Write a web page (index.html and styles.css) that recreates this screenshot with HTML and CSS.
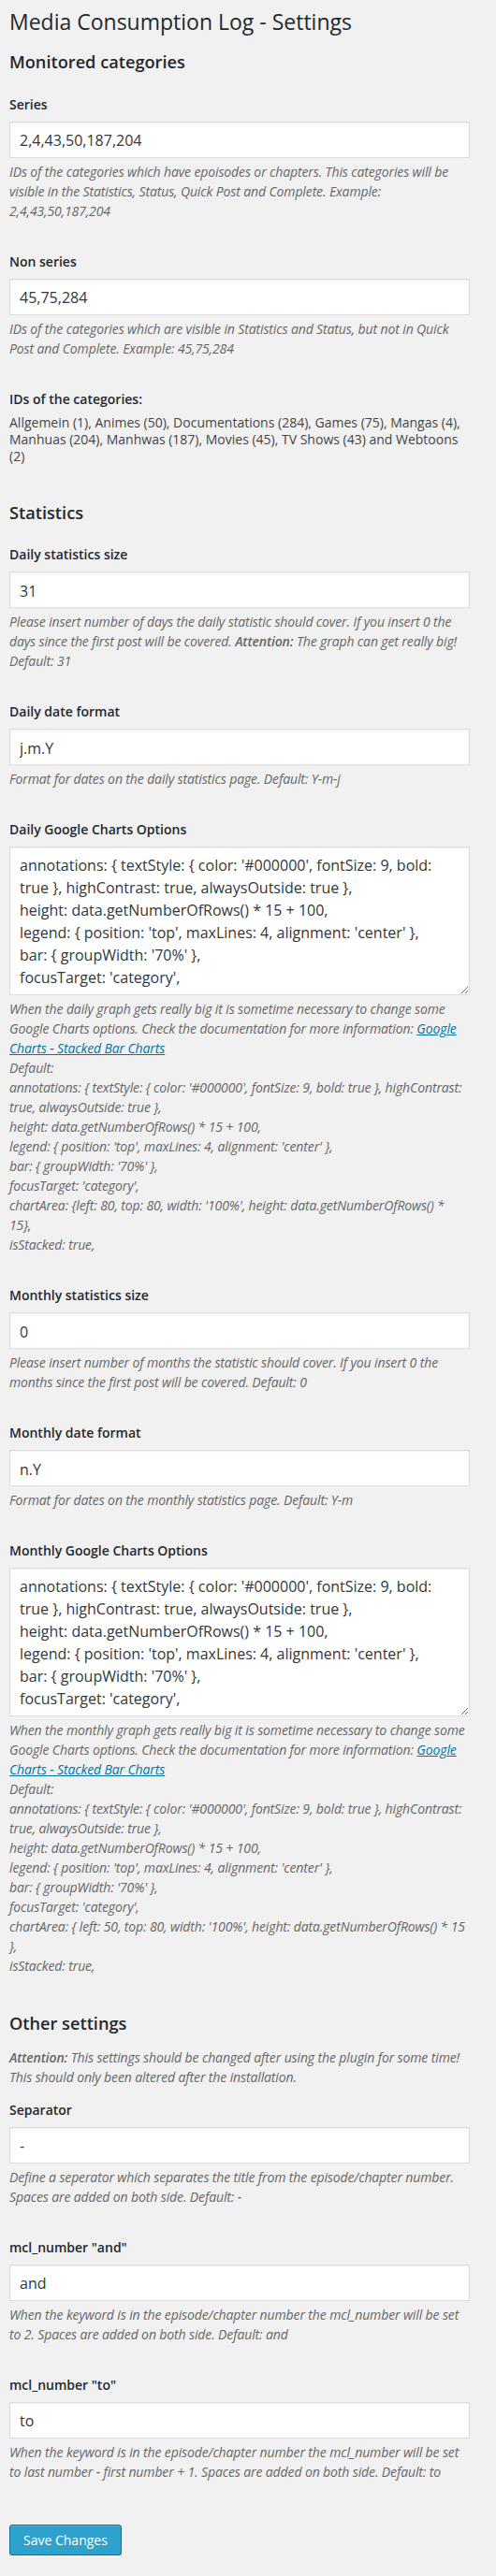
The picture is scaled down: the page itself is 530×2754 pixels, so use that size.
FILE: index.html
```html
<!DOCTYPE html>
<html lang="en">
<head>
<meta charset="utf-8">
<title>Media Consumption Log - Settings</title>
<link rel="stylesheet" href="styles.css">
</head>
<body>
<div class="wrap">
  <h1 class="page-title">Media Consumption Log - Settings</h1>
  <form class="settings-form">
    <h2 class="section-title">Monitored categories</h2>

    <div class="field">
      <label class="field-label">Series</label>
      <input class="text-input" type="text" value="2,4,43,50,187,204">
      <p class="description">IDs of the categories which have epoisodes or chapters. This categories will be visible in the Statistics, Status, Quick Post and Complete. Example: 2,4,43,50,187,204</p>
    </div>

    <div class="field">
      <label class="field-label">Non series</label>
      <input class="text-input" type="text" value="45,75,284">
      <p class="description">IDs of the categories which are visible in Statistics and Status, but not in Quick Post and Complete. Example: 45,75,284</p>
    </div>

    <div class="field">
      <div class="field-label is-static">IDs of the categories:</div>
      <div class="field-value">Allgemein (1), Animes (50), Documentations (284), Games (75), Mangas (4), Manhuas (204), Manhwas (187), Movies (45), TV Shows (43) and Webtoons (2)</div>
    </div>

    <h2 class="section-title">Statistics</h2>

    <div class="field">
      <label class="field-label">Daily statistics size</label>
      <input class="text-input" type="text" value="31">
      <p class="description">Please insert number of days the daily statistic should cover. If you insert 0 the days since the first post will be covered. <strong>Attention:</strong> The graph can get really big! Default: 31</p>
    </div>

    <div class="field">
      <label class="field-label">Daily date format</label>
      <input class="text-input" type="text" value="j.m.Y">
      <p class="description">Format for dates on the daily statistics page. Default: Y-m-j</p>
    </div>

    <div class="field">
      <label class="field-label">Daily Google Charts Options</label>
      <textarea class="code-input">annotations: { textStyle: { color: '#000000', fontSize: 9, bold: true }, highContrast: true, alwaysOutside: true },
height: data.getNumberOfRows() * 15 + 100,
legend: { position: 'top', maxLines: 4, alignment: 'center' },
bar: { groupWidth: '70%' },
focusTarget: 'category',
chartArea: {left: 80, top: 80, width: '100%', height: data.getNumberOfRows() * 15},
isStacked: true,
</textarea>
      <p class="description">When the daily graph gets really big it is sometime necessary to change some Google Charts options. Check the documentation for more information: <a href="#">Google Charts - Stacked Bar Charts</a><br>Default:<br>annotations: { textStyle: { color: '#000000', fontSize: 9, bold: true }, highContrast: true, alwaysOutside: true },<br>height: data.getNumberOfRows() * 15 + 100,<br>legend: { position: 'top', maxLines: 4, alignment: 'center' },<br>bar: { groupWidth: '70%' },<br>focusTarget: 'category',<br>chartArea: {left: 80, top: 80, width: '100%', height: data.getNumberOfRows() *<br>15},<br>isStacked: true,</p>
    </div>

    <div class="field">
      <label class="field-label">Monthly statistics size</label>
      <input class="text-input" type="text" value="0">
      <p class="description">Please insert number of months the statistic should cover. If you insert 0 the months since the first post will be covered. Default: 0</p>
    </div>

    <div class="field">
      <label class="field-label">Monthly date format</label>
      <input class="text-input" type="text" value="n.Y">
      <p class="description">Format for dates on the monthly statistics page. Default: Y-m</p>
    </div>

    <div class="field">
      <label class="field-label">Monthly Google Charts Options</label>
      <textarea class="code-input">annotations: { textStyle: { color: '#000000', fontSize: 9, bold: true }, highContrast: true, alwaysOutside: true },
height: data.getNumberOfRows() * 15 + 100,
legend: { position: 'top', maxLines: 4, alignment: 'center' },
bar: { groupWidth: '70%' },
focusTarget: 'category',
chartArea: { left: 50, top: 80, width: '100%', height: data.getNumberOfRows() * 15 },
isStacked: true,
</textarea>
      <p class="description">When the monthly graph gets really big it is sometime necessary to change some Google Charts options. Check the documentation for more information: <a href="#">Google Charts - Stacked Bar Charts</a><br>Default:<br>annotations: { textStyle: { color: '#000000', fontSize: 9, bold: true }, highContrast: true, alwaysOutside: true },<br>height: data.getNumberOfRows() * 15 + 100,<br>legend: { position: 'top', maxLines: 4, alignment: 'center' },<br>bar: { groupWidth: '70%' },<br>focusTarget: 'category',<br>chartArea: { left: 50, top: 80, width: '100%', height: data.getNumberOfRows() * 15 },<br>isStacked: true,</p>
    </div>

    <h2 class="section-title is-tight">Other settings</h2>
    <p class="description section-intro"><strong>Attention:</strong> This settings should be changed after using the plugin for some time! This should only been altered after the installation.</p>

    <div class="field">
      <label class="field-label">Separator</label>
      <input class="text-input" type="text" value="-">
      <p class="description">Define a seperator which separates the title from the episode/chapter number. Spaces are added on both side. Default: -</p>
    </div>

    <div class="field">
      <label class="field-label">mcl_number "and"</label>
      <input class="text-input" type="text" value="and">
      <p class="description">When the keyword is in the episode/chapter number the mcl_number will be set to 2. Spaces are added on both side. Default: and</p>
    </div>

    <div class="field">
      <label class="field-label">mcl_number "to"</label>
      <input class="text-input" type="text" value="to">
      <p class="description">When the keyword is in the episode/chapter number the mcl_number will be set to last number - first number + 1. Spaces are added on both side. Default: to</p>
    </div>

    <div class="submit-row">
      <button class="button-primary" type="button">Save Changes</button>
    </div>
  </form>
</div>
</body>
</html>
```
FILE: styles.css
```css
* {
  box-sizing: border-box;
}

html,
body {
  margin: 0;
  padding: 0;
}

body {
  background: #f1f1f1;
  font-family: "Open Sans", "Liberation Sans", sans-serif;
  font-size: 14px;
  color: #444;
}

.wrap {
  display: flex;
  flex-direction: column;
  padding: 9px 28px 0 10px;
}

.page-title {
  margin: 0 0 10px;
  font-size: 23px;
  font-weight: 400;
  line-height: 29px;
  color: #23282d;
}

.settings-form {
  display: flex;
  flex-direction: column;
}

.section-title {
  margin: 7px 0 22px;
  font-size: 18.2px;
  font-weight: 600;
  line-height: 23.66px;
  color: #23282d;
}

.section-title.is-tight {
  margin-bottom: 13px;
}

.field {
  display: flex;
  flex-direction: column;
  margin-bottom: 33px;
}

.field-label {
  margin-bottom: 8px;
  font-size: 14px;
  font-weight: 600;
  line-height: 21px;
  color: #23282d;
}

.field-label.is-static {
  margin-bottom: 6px;
}

.field-value {
  font-size: 14px;
  line-height: 18px;
  color: #444;
}

.text-input {
  width: 100%;
  height: 39px;
  margin: 0;
  padding: 2px 10px 0;
  border: 1px solid #ddd;
  border-radius: 0;
  background: #fff;
  box-shadow: inset 0 1px 2px rgba(0, 0, 0, 0.07);
  font-family: "Open Sans", "Liberation Sans", sans-serif;
  font-size: 16px;
  color: #32373c;
  outline: none;
}

.code-input {
  display: block;
  width: 100%;
  height: 159px;
  margin: 0;
  padding: 7px 10px;
  border: 1px solid #ddd;
  border-radius: 0;
  background: #fff;
  box-shadow: inset 0 1px 2px rgba(0, 0, 0, 0.07);
  font-family: "Open Sans", "Liberation Sans", sans-serif;
  font-size: 16px;
  line-height: 1.5;
  color: #32373c;
  resize: vertical;
  outline: none;
}

.code-input::-webkit-scrollbar {
  width: 10px;
  background: transparent;
}

.code-input::-webkit-scrollbar-thumb {
  background: #e2e2e2;
  border: 2px solid transparent;
  border-radius: 5px;
  background-clip: padding-box;
}

.code-input::-webkit-scrollbar-track {
  background: transparent;
}

.description {
  margin: 4px 0 0;
  font-size: 14px;
  font-style: italic;
  line-height: 21px;
  letter-spacing: -0.12px;
  color: #666;
}

.description.section-intro {
  margin: 0 0 14px;
}

.description strong {
  font-weight: 600;
}

.description a {
  color: #0074a2;
  text-decoration: underline;
}

.submit-row {
  margin-top: 13px;
}

.button-primary {
  display: inline-block;
  margin: 0;
  padding: 6px 14px;
  border: 1px solid #0074a2;
  border-radius: 3px;
  background: #2ea2cc;
  box-shadow: inset 0 1px 0 rgba(120, 200, 230, 0.5), 0 1px 0 rgba(0, 0, 0, 0.15);
  font-family: "Open Sans", "Liberation Sans", sans-serif;
  font-size: 14px;
  line-height: normal;
  color: #fff;
  cursor: pointer;
}
```
